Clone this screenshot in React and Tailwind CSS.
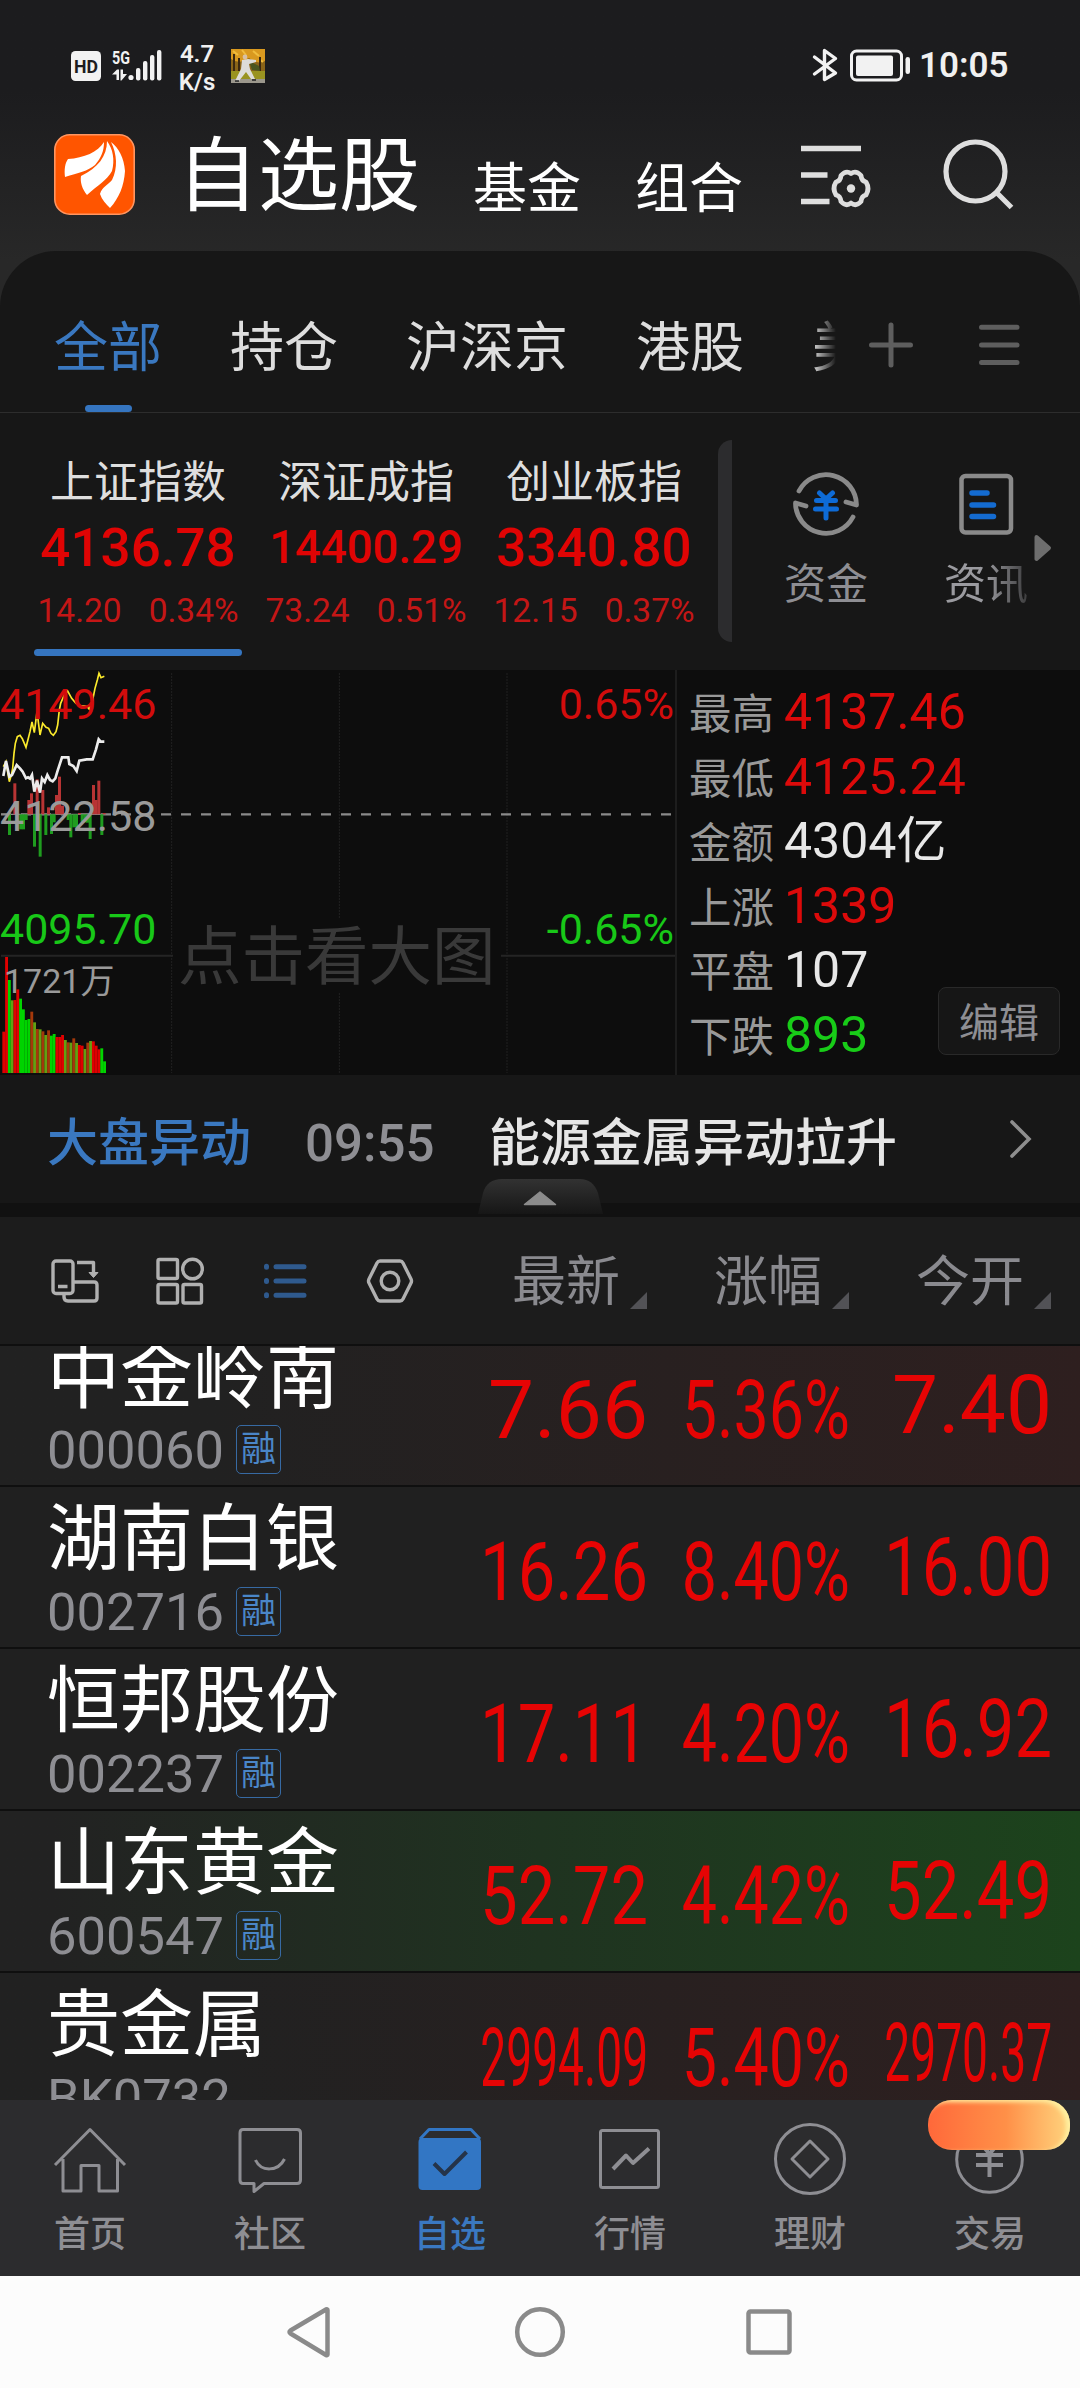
const indexes = [
  { name: "上证指数", value: "4136.78", size: "text-[53px]", change: "14.20", percent: "0.34%", active: true },
  { name: "深证成指", value: "14400.29", size: "text-[45.500px]", change: "73.24", percent: "0.51%" },
  { name: "创业板指", value: "3340.80", size: "text-[53px]", change: "12.15", percent: "0.37%" },
];

const stats = [
  { label: "最高", value: "4137.46", color: "text-[#dc0a0a]" },
  { label: "最低", value: "4125.24", color: "text-[#dc0a0a]" },
  { label: "金额", value: "4304亿", color: "text-[#e8e8e8]" },
  { label: "上涨", value: "1339", color: "text-[#dc0a0a]" },
  { label: "平盘", value: "107", color: "text-[#e8e8e8]" },
  { label: "下跌", value: "893", color: "text-[#18cc18]" },
];

const normal = "bg-[#202020]";
const red = "bg-linear-to-r from-[#212121] from-20% to-[#2e1f1f]";
const green = "bg-linear-to-r from-[#222222] from-5% via-[#1f3320] via-50% to-[#1c431c]";

const stocks = [
  { name: "中金岭南", code: "000060", margin: true, bg: red, price: "7.66", priceScale: "scale-x-100", percent: "5.36%", open: "7.40", openScale: "scale-x-100" },
  { name: "湖南白银", code: "002716", margin: true, bg: normal, price: "16.26", priceScale: "scale-x-[0.815]", percent: "8.40%", open: "16.00", openScale: "scale-x-[0.815]" },
  { name: "恒邦股份", code: "002237", margin: true, bg: normal, price: "17.11", priceScale: "scale-x-[0.815]", percent: "4.20%", open: "16.92", openScale: "scale-x-[0.815]" },
  { name: "山东黄金", code: "600547", margin: true, bg: green, price: "52.72", priceScale: "scale-x-[0.815]", percent: "4.42%", open: "52.49", openScale: "scale-x-[0.815]" },
  { name: "贵金属", code: "BK0732", margin: false, bg: red, price: "2994.09", priceScale: "scale-x-[0.563]", percent: "5.40%", open: "2970.37", openScale: "scale-x-[0.563]" },
];

// x and outer end of the bars around the middle line
const upBars = [[40, 370], [82, 420], [90, 400], [107, 358], [124, 390], [141, 442], [165, 405], [174, 350], [183, 437], [234, 459], [276, 375], [284, 420], [292, 362], [308, 459]];
const downBars = [[24, 525], [58, 508], [66, 508], [74, 480], [99, 560], [116, 590], [133, 525], [150, 522], [158, 487], [200, 480], [208, 532], [217, 502], [225, 502], [242, 487], [250, 487], [258, 488], [266, 537], [301, 525]];

const volumeColors = { R: "#e00000", G: "#00d400", r: "#a4380a", g: "#63a012" };
const volumes = [
  ["R", 1115], ["R", 891], ["G", 960], ["g", 1021], ["R", 1020], ["R", 988], ["G", 1016], ["G", 1048], ["G", 1080], ["G", 1077],
  ["r", 1055], ["g", 1087], ["r", 1107], ["g", 1108], ["r", 1114], ["g", 1125], ["r", 1111], ["G", 1127], ["G", 1122], ["R", 1131],
  ["R", 1131], ["R", 1125], ["g", 1140], ["r", 1147], ["g", 1148], ["r", 1135], ["g", 1149], ["R", 1155], ["R", 1157], ["g", 1167],
  ["r", 1148], ["g", 1143], ["R", 1144], ["R", 1157], ["R", 1168], ["G", 1165], ["G", 1204],
];

const StatusBar = () => (
  <div className="flex h-[130px] items-start pl-[71px] pr-[72px] text-[#f0f0f0]">
    <svg className="mt-[49px] h-[34px] w-[92px]" viewBox="71 49 92 34" fill="#f2f2f2">
      <rect x="71" y="51" width="30" height="30" rx="4.500" />
      <text x="86" y="73" textAnchor="middle" fontFamily="Roboto" fontWeight="700" fontSize="19" fill="#1c1c1e" textLength="24" lengthAdjust="spacingAndGlyphs">HD</text>
      <text x="112" y="63.500" fontFamily="Roboto" fontWeight="700" fontSize="18.500" textLength="18" lengthAdjust="spacingAndGlyphs">5G</text>
      <path d="M112 74.500 L117 69.500 H119 V80 H116.500 V74.500 Z M120.500 69.500 H123 V74 H127 L121.500 80.500 H120.500 Z" />
      <circle cx="131" cy="77.500" r="2.600" />
      <rect x="136" y="68" width="4.400" height="12.500" rx="2" />
      <rect x="143" y="61" width="4.400" height="19.500" rx="2" />
      <rect x="150" y="55" width="4.400" height="25.500" rx="2" />
      <rect x="157" y="50" width="4.400" height="30.500" rx="2" />
    </svg>
    <div className="mt-[40px] w-[68px] text-center text-[24px] leading-[28px] font-semibold">
      <div>4.7</div>
      <div>K/s</div>
    </div>
    <svg className="mt-[49px] h-[34px] w-[34px]" viewBox="0 0 34 34">
      <rect width="34" height="34" fill="#8a6418" />
      <path d="M0 0H34V12Q26 16 18 9Q8 16 0 10Z" fill="#d9991f" />
      <path d="M2 2l5 4M11 1l4 5M22 2l6 5M28 10l4 3" stroke="#f0bd3e" strokeWidth="2" />
      <path d="M3 5V24M8 9V23M29 8V22" stroke="#3b2810" strokeWidth="2" />
      <rect y="22" width="34" height="9" fill="#9a9320" />
      <rect y="30" width="34" height="4" fill="#9b978c" />
      <path d="M18 12L28 17L29 22L21 21Z" fill="#4a5520" />
      <circle cx="14" cy="8" r="2.400" fill="#d8c0a4" />
      <path d="M11 11L17 10L25 11V13L18 15L19 20L24 30H20L15 23L8 32H4L10 20Z" fill="#dedcd8" />
      <path d="M4 32h4M21 31h4" stroke="#222" strokeWidth="1.600" />
    </svg>
    <svg className="mt-[47px] ml-auto h-[38px] w-[100px]" viewBox="812 47 100 38" fill="none" stroke="#f2f2f2">
      <path d="M814.500 57 L835.500 73 L824.500 79.500 V50.500 L835.500 58.500 L814.500 74" strokeWidth="3.400" strokeLinecap="round" strokeLinejoin="round" />
      <rect x="851.500" y="51" width="50" height="29" rx="5" strokeWidth="3" />
      <rect x="856" y="55.500" width="37" height="20.500" rx="2" fill="#f2f2f2" stroke="none" />
      <rect x="905.500" y="57" width="4.500" height="17" rx="2.200" fill="#f2f2f2" stroke="none" />
    </svg>
    <div className="mt-[46px] ml-[7px] w-[89px] text-[35px] leading-[40px] font-semibold">10:05</div>
  </div>
);

const TopBar = () => (
  <div className="flex h-[121px] items-start pl-[54px]">
    <svg className="mt-[4px] h-[81px] w-[81px]" viewBox="0 0 81 81">
      <rect x="0.800" y="0.800" width="79.400" height="79.400" rx="15" fill="#ff5500" stroke="#ff9560" strokeWidth="1.600" />
      <path d="M50 8 C44 18 30 24 14 25 C11 29 10 36 11 43 C24 39 34 37 41 31 C47 24 50 17 50 8Z" fill="#fff" />
      <path d="M53 7 C53 22 44 34 27 42 C26 48 28 55 33 61 C44 51 53 46 58 37 C61 26 59 15 53 7Z" fill="#fff" />
      <path d="M57 8 C63 20 64 34 58 46 C54 51 48 53 46 60 C48 66 52 70 56 74 C65 64 70 52 71 37 C70 24 65 14 57 8Z" fill="#fff" />
    </svg>
    <div className="mt-[-3px] ml-[42px] flex h-[100px] items-start leading-[100px] text-white">
      <span className="text-[81px]">自选股</span>
      <span className="mt-[13px] ml-[53px] text-[54px]">基金</span>
      <span className="mt-[13px] ml-[54px] text-[54px]">组合</span>
    </div>
    <svg className="mt-[10px] ml-[55px] h-[78px] w-[76px]" viewBox="798 140 76 78" fill="none" stroke="#dedede" strokeWidth="5.500">
      <path d="M801 148.500H861M801 175H827.500M801 201.500H829.500" />
      <path strokeWidth="4.800" strokeLinejoin="round" d="M851 173.500 Q856 170 861 175.500 Q861.500 181 866 182 Q870 188.500 866 195 Q861.500 196 861 201.500 Q856 207 851 203 Q846 207 841 201.500 Q840.500 196 836 195 Q832 188.500 836 182 Q840.500 181 841 175.500 Q846 170 851 173.500 Z" />
      <circle cx="851" cy="188.500" r="4.200" fill="#dedede" stroke="none" />
    </svg>
    <svg className="mt-[6px] ml-[66px] h-[78px] w-[80px]" viewBox="940 136 80 78" fill="none" stroke="#dedede" strokeWidth="5.200">
      <circle cx="975.500" cy="171.500" r="29.500" />
      <path d="M996 192 L1011.500 207.500" />
    </svg>
  </div>
);

const Tabs = () => (
  <div className="flex h-[162px] border-b border-[#2d2d2d] pl-[54px]">
    <div className="flex w-[782px] gap-[68px] overflow-hidden mask-r-from-[758px] mask-r-to-[782px] text-[54px] leading-[196px] whitespace-nowrap text-[#dedede]">
      <div className="flex flex-col items-center text-[#3a78c0]">
        <span className="h-[154px]">全部</span>
        <span className="h-[7px] w-[47px] rounded-full bg-[#3575c0]"></span>
      </div>
      <span>持仓</span>
      <span>沪深京</span>
      <span>港股</span>
      <span>美股</span>
    </div>
    <svg className="mt-[70px] ml-[32px] h-[48px] w-[46px]" viewBox="0 0 46 48" stroke="#5e5e5e" strokeWidth="5" strokeLinecap="round">
      <path d="M23 4V44M3.500 24H42.500" />
    </svg>
    <svg className="mt-[70px] ml-[62px] h-[48px] w-[46px]" viewBox="976 321 46 48" stroke="#5e5e5e" strokeWidth="5" strokeLinecap="round">
      <path d="M981.500 327.300H1017M981.500 345H1017M981.500 362.500H1017" />
    </svg>
  </div>
);

const IndexStrip = () => (
  <div className="flex h-[257px] pl-[24px]">
    {indexes.map((item) => (
      <div key={item.name} className="flex w-[228px] flex-col items-center pt-[42px]">
        <div className="text-[44px] leading-[56px] text-[#dedede]">{item.name}</div>
        <div className={`${item.size} mt-[4px] h-[66px] leading-[66px] font-medium text-[#e00404]`}>{item.value}</div>
        <div className="mt-[8px] flex gap-[27px] text-[33.500px] leading-[44px] text-[#c41616]">
          <span>{item.change}</span>
          <span>{item.percent}</span>
        </div>
        {item.active && <div className="mt-[16px] h-[7px] w-[208px] rounded-full bg-[#3575c0]"></div>}
      </div>
    ))}
    <div className="mt-[27px] ml-[10px] h-[202px] w-[14px] rounded-l-[14px] bg-[#2c2c2e]"></div>
    <div className="ml-[13px] flex w-[162px] flex-col items-center pt-[54px]">
      <svg className="h-[74px] w-[74px]" viewBox="789 467 74 74" fill="none" stroke="#8a8a8a" strokeWidth="4.800" strokeLinecap="round" strokeLinejoin="round">
        <path d="M799 491 A30.500 30.500 0 0 1 856.500 505 L846 502" />
        <path d="M853 517 A30.500 30.500 0 0 1 795.500 503 L806 506" />
        <path stroke="#0e6bd6" strokeWidth="5" d="M819.500 493 L826 499 L832.500 493 M816.500 500.500H835.500M815.500 509H836.500M826 500V518" />
      </svg>
      <div className="mt-[14px] text-[42px] leading-[60px] text-[#8e8e93]">资金</div>
    </div>
    <div className="flex w-[122px] flex-col items-center pt-[54px] pl-[36px]">
      <svg className="h-[74px] w-[74px]" viewBox="949 467 74 74" fill="none" stroke="#8a8a8a" strokeWidth="4.500" strokeLinecap="round">
        <rect x="961.500" y="476" width="49.500" height="56.500" rx="4" />
        <path stroke="#146bd0" strokeWidth="5.500" d="M972 493H987M972 505H993.500M972 516.500H993.500" />
      </svg>
      <div className="mt-[14px] mask-r-from-50% mask-r-to-120% text-[42px] leading-[60px] whitespace-nowrap text-[#9a9a9f]">资讯</div>
    </div>
    <svg className="mt-[121px] ml-[5px] h-[28px] w-[18px]" viewBox="0 0 18 28" fill="#6e6e6e" stroke="#6e6e6e" strokeWidth="4" strokeLinejoin="round">
      <path d="M2.500 3L15 14L2.500 25Z" />
    </svg>
  </div>
);

const MinuteChart = () => (
  <div className="relative h-[403px] w-[675px] text-[43px] leading-[50px]">
    <svg className="absolute inset-0 h-[403px] w-[675px]" viewBox="0 30 2025 1209">
      <path d="M515 40V1239M1018 40V775M1018 1000V1239M1521 40V1239" stroke="#2c2c2c" strokeWidth="3" strokeDasharray="4 5" />
      <path d="M3 887H519M1503 887H2025" stroke="#242424" strokeWidth="6" />
      <path d="M3 463H2016" stroke="#8a8a8a" strokeWidth="7" strokeDasharray="30 30" />
      <path d="M3 463H318" stroke="#8a8a8a" strokeWidth="4" />
      {upBars.map(([x, y]) => <rect key={x} x={x} y={y} width="9" height={463 - y} fill="#b83434" />)}
      {downBars.map(([x, y]) => <rect key={x} x={x} y="463" width="9" height={y - 463} fill="#1f9c1f" />)}
      {volumes.map(([color, y], i) => (
        <rect key={i} x={7 + i * 8.4} y={y} width="8.600" height={1239 - y} fill={volumeColors[color]} />
      ))}
      <polyline fill="none" stroke="#fbea2c" strokeWidth="5" points="10,320 18,305 22,330 28,365 34,345 38,325 42,280 46,250 52,230 60,226 67,236 78,262 85,235 90,215 96,186 103,218 111,155 120,225 128,190 138,202 146,205 153,220 160,226 168,215 173,195 178,150 182,130 195,100 203,93 215,115 228,130 240,138 255,138 262,140 268,148 278,120 285,85 292,60 297,40 303,53 313,49" />
      <polyline fill="none" stroke="#ececec" strokeWidth="8" points="10,348 18,303 28,350 36,345 50,315 60,325 68,335 78,355 84,352 90,356 96,345 103,395 111,362 120,398 126,355 134,366 142,345 150,360 158,364 166,355 172,335 186,292 205,292 208,312 220,318 230,333 238,302 260,298 278,298 288,268 296,238 302,245 313,245" />
    </svg>
    <div className="relative flex justify-between pt-[9px] pr-px text-[#d20c0c]">
      <span>4149.46</span>
      <span>0.65%</span>
    </div>
    <div className="relative mt-[62px] text-[#9a9a9a]">4122.58</div>
    <div className="relative mt-[63px] flex justify-between pr-px text-[#18c818]">
      <span>4095.70</span>
      <span>-0.65%</span>
    </div>
    <div className="relative mt-[2px] pl-[4px] text-[34px] leading-[50px] text-[#9a9a9a]">1721万</div>
    <div className="absolute top-[248px] left-[178px] text-[63.500px] leading-[80px] text-[#393939]">点击看大图</div>
  </div>
);

const Market = () => (
  <div className="flex h-[405px] bg-[#0d0d0d]">
    <MinuteChart />
    <div className="relative w-[405px] border-l-2 border-[#1d1d1d] pt-[10px] pl-[12px]">
      {stats.map((item) => (
        <div key={item.label} className="flex h-[64.500px] items-baseline leading-[64px]">
          <span className="text-[42.500px] text-[#999999]">{item.label}</span>
          <span className={`ml-[10px] text-[50px] ${item.color}`}>{item.value}</span>
        </div>
      ))}
      <div className="absolute right-[20px] bottom-[20px] h-[68px] w-[122px] rounded-[8px] border border-[#292929] bg-[#161616] text-center text-[40px] leading-[72px] text-[#8e8e93]">编辑</div>
    </div>
  </div>
);

const News = () => (
  <div className="relative flex h-[142px] border-b-[14px] border-[#111111] bg-[#171717] pl-[47px] text-[51px] leading-[138px] font-medium">
    <span className="text-[#3a78c0]">大盘异动</span>
    <span className="ml-[54px] w-[184px] text-[#8e8e93]">09:55</span>
    <span className="text-[#e6e6e6]">能源金属异动拉升</span>
    <svg className="absolute top-[43px] left-[1008px] h-[42px] w-[26px]" viewBox="0 0 26 42" fill="none" stroke="#8e8e8e" strokeWidth="3.600" strokeLinecap="round">
      <path d="M4 4L21 21L4 38" />
    </svg>
    <svg className="absolute top-[104px] left-[478px] h-[35px] w-[126px]" viewBox="0 0 126 35">
      <defs>
        <linearGradient id="handle" x1="0" y1="0" x2="0" y2="1">
          <stop offset="0" stopColor="#323232" />
          <stop offset="1" stopColor="#161616" />
        </linearGradient>
      </defs>
      <path d="M0 35 L5 14 Q9 0 24 0 H102 Q115 0 120 14 L125 35 Z" fill="url(#handle)" />
      <path d="M46.500 25.500 L62 13 L77.500 25.500 Z" fill="#8c8c8c" stroke="#8c8c8c" strokeWidth="1.500" strokeLinejoin="round" />
    </svg>
  </div>
);

const Toolbar = () => (
  <div className="flex h-[129px] border-b-2 border-[#0f0f0f] bg-[#1c1c1c]">
    <svg className="h-[127px] w-[446px]" viewBox="0 1217 446 127" fill="none" stroke="#b0b0b0" strokeWidth="3.400" strokeLinejoin="round">
      <rect x="53" y="1261" width="20" height="32.500" rx="3" />
      <path d="M58 1286.500H67.500M77 1262.500H93.500V1273M64 1294V1297Q64 1301 68 1301H94Q97 1301 97 1298V1285Q97 1282 94 1282H74" />
      <path d="M89 1272.500H98L93.500 1277.500Z" fill="#b0b0b0" strokeWidth="1" />
      <rect x="158" y="1259.500" width="19.500" height="19" rx="1.500" />
      <circle cx="192.500" cy="1269" r="9.800" />
      <rect x="158" y="1284.500" width="19.500" height="18.500" rx="1.500" />
      <rect x="183" y="1284.500" width="18.500" height="18.500" rx="1.500" />
      <g stroke="#2f5a8e" strokeWidth="5" strokeLinecap="round">
        <path d="M276 1266.700H304M276 1281H304M276 1295.300H304M266.500 1266.200V1267.200M266.500 1280.500V1281.500M266.500 1294.800V1295.800" />
      </g>
      <path d="M380 1261 H400 Q402 1261 403 1263 L411 1279 Q412 1281 411 1283 L403 1299 Q402 1301 400 1301 H380 Q378 1301 377 1299 L369 1283 Q368 1281 369 1279 L377 1263 Q378 1261 380 1261Z" />
      <circle cx="390" cy="1281" r="8.800" />
    </svg>
    {["最新", "涨幅", "今开"].map((label) => (
      <div key={label} className="flex w-[202px] justify-end text-[54px] leading-[132px] text-[#8a8a8f]">
        <span>{label}</span>
        <svg className="mt-[75px] mr-px ml-[10px] h-[17px] w-[17px]" viewBox="0 0 17 17">
          <path d="M17 0V17H0Z" fill="#525256" />
        </svg>
      </div>
    ))}
  </div>
);

const StockRow = ({ stock }) => (
  <div className={`flex h-[162px] border-b-2 border-[#0f0f0f] ${stock.bg}`}>
    <div className="w-[446px] pl-[47px]">
      <div className="mt-[6px] h-[92px] text-[73px] leading-[92px] text-white">{stock.name}</div>
      <div className="mt-px flex text-[52.500px] leading-[52px] text-[#8e8e93]">
        <span>{stock.code}</span>
        {stock.margin && (
          <span className="mt-px ml-[12px] h-[49px] w-[45px] rounded-[5px] border-[1.500px] border-[#376aa3] text-center text-[35px] leading-[48px] text-[#4a86c8]">融</span>
        )}
      </div>
    </div>
    <div className="mt-[35px] flex text-[82px] leading-[100px] text-[#e60404]">
      <div className="flex w-[202px] justify-end">
        <span className={`origin-right ${stock.priceScale}`}>{stock.price}</span>
      </div>
      <div className="flex w-[202px] justify-end">
        <span className="origin-right scale-x-[0.765]">{stock.percent}</span>
      </div>
      <div className="mt-[-5px] flex w-[202px] justify-end">
        <span className={`origin-right ${stock.openScale}`}>{stock.open}</span>
      </div>
    </div>
  </div>
);

const navItems = [
  {
    label: "首页",
    icon: <path d="M55 45 L90 9.500 L125 45 M63 39V71H81V45.500H99V71H117.500V39" />,
  },
  {
    label: "社区",
    icon: <path d="M63 9.500H117Q120.500 9.500 120.500 13V60Q120.500 63.500 117 63.500H84L74 71.500V63.500H63Q60 63.500 60 60V13Q60 9.500 63 9.500ZM75.500 40C81 52 98 52 104.500 39" />,
  },
  {
    label: "自选",
    active: true,
    icon: (
      <>
        <path d="M60 19L69 9.500H111L120 19" stroke="#3276c4" />
        <rect x="58.500" y="18" width="62.500" height="52" rx="4" fill="#3276c4" stroke="none" />
        <path d="M74 43.500L84.500 54L106.500 32" stroke="#25344a" strokeWidth="4" />
      </>
    ),
  },
  {
    label: "行情",
    icon: (
      <>
        <rect x="60.500" y="10.500" width="58" height="57" rx="2" />
        <path d="M73 49L86 35.500L93 43L109 28.500" strokeWidth="4" />
      </>
    ),
  },
  {
    label: "理财",
    icon: (
      <>
        <circle cx="90" cy="39" r="34.500" />
        <path d="M90 21L108 39L90 57L72 39Z" />
      </>
    ),
  },
  {
    label: "交易",
    icon: (
      <>
        <circle cx="89.500" cy="39.500" r="32.800" />
        <path d="M78 20L89.500 34L101 20M76 35H103M76 45H103M89.500 34V57" strokeWidth="4" />
      </>
    ),
  },
];

const BottomNav = () => (
  <div className="relative flex h-[176px] bg-[#2c2c2e]">
    {navItems.map((item) => (
      <div key={item.label} className={`flex w-[180px] flex-col items-center pt-[20px] text-[36px] leading-[48px] font-medium ${item.active ? "text-[#3a78c0]" : "text-[#8e8e93]"}`}>
        <svg className="mb-[11px] h-[80px] w-[180px]" viewBox="0 0 180 80" fill="none" stroke="#8e8e93" strokeWidth="3" strokeLinejoin="round">
          {item.icon}
        </svg>
        {item.label}
      </div>
    ))}
    <div className="absolute top-0 left-[928px] h-[50px] w-[142px] rounded-[24px] bg-linear-to-r from-[#ff683a] via-[#ff9048] via-55% to-[#ffd47e] shadow-[inset_-4px_2px_4px_#fff0a0]"></div>
  </div>
);

const SystemNav = () => (
  <div className="h-[112px] bg-[#fcfcfc]">
    <svg className="h-[112px] w-[1080px]" viewBox="0 0 1080 112" fill="none" stroke="#8a8a8a" strokeWidth="4.500" strokeLinejoin="round">
      <path d="M327.500 34V78.500Q327.500 79.500 326 79L290.500 57.500Q288.500 56 290.500 54.500L326 33.500Q327.500 33 327.500 34Z" />
      <circle cx="540" cy="56" r="22.800" />
      <rect x="748.500" y="35.500" width="41" height="41" rx="2" />
    </svg>
  </div>
);

export default function App() {
  return (
    <div className="h-[2388px] w-[1080px] overflow-hidden bg-[#262626] font-[Roboto,'Noto_Sans_CJK_SC',sans-serif]">
      <div className="h-[307px] bg-linear-to-b from-[#1c1c1e] from-30% to-[#282828] to-85%">
        <StatusBar />
        <TopBar />
      </div>
      <div className="mt-[-56px] rounded-t-[56px] bg-[#171717]">
        <Tabs />
        <IndexStrip />
        <Market />
      </div>
      <News />
      <Toolbar />
      <div className="flex h-[754px] flex-col overflow-hidden">
        <div className="mt-[-21px]">
          {stocks.map((stock) => (
            <StockRow key={stock.code} stock={stock} />
          ))}
        </div>
      </div>
      <BottomNav />
      <SystemNav />
    </div>
  );
}
